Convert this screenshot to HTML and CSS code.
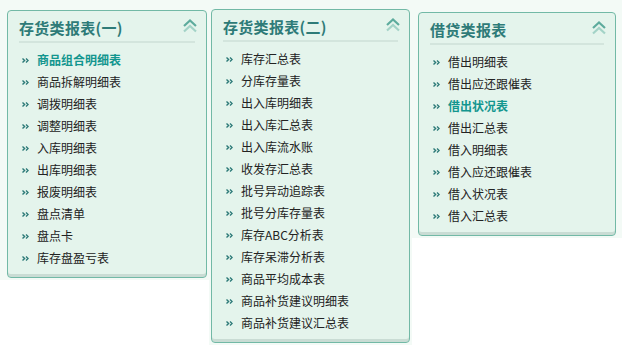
FILE: index.html
```html
<!DOCTYPE html>
<html lang="zh-CN">
<head>
<meta charset="UTF-8" />
<title>报表</title>
<link rel="stylesheet" href="styles.css">
</head>
<body>

<div class="board">

  <!-- 存货类报表(一) -->
  <div class="col col-1">
    <div class="panel">
      <div class="panel-head">
        <span class="title">存货类报表(一)</span>
        <svg class="fold" width="14" height="14" viewBox="0 0 14 14"><path d="M1 7 L7 1.5 L13 7" fill="none" stroke="#5dab9d" stroke-width="2.2"/><path d="M1 12.5 L7 7 L13 12.5" fill="none" stroke="#a3d3c7" stroke-width="2.2"/></svg>
      </div>
      <ul class="links">
        <li class="on">商品组合明细表</li>
        <li>商品拆解明细表</li>
        <li>调拨明细表</li>
        <li>调整明细表</li>
        <li>入库明细表</li>
        <li>出库明细表</li>
        <li>报废明细表</li>
        <li>盘点清单</li>
        <li>盘点卡</li>
        <li>库存盘盈亏表</li>
      </ul>
    </div>
  </div>

  <!-- 存货类报表(二) -->
  <div class="col col-2">
    <div class="panel">
      <div class="panel-head">
        <span class="title">存货类报表(二)</span>
        <svg class="fold" width="14" height="14" viewBox="0 0 14 14"><path d="M1 7 L7 1.5 L13 7" fill="none" stroke="#5dab9d" stroke-width="2.2"/><path d="M1 12.5 L7 7 L13 12.5" fill="none" stroke="#a3d3c7" stroke-width="2.2"/></svg>
      </div>
      <ul class="links">
        <li>库存汇总表</li>
        <li>分库存量表</li>
        <li>出入库明细表</li>
        <li>出入库汇总表</li>
        <li>出入库流水账</li>
        <li>收发存汇总表</li>
        <li>批号异动追踪表</li>
        <li>批号分库存量表</li>
        <li>库存ABC分析表</li>
        <li>库存呆滞分析表</li>
        <li>商品平均成本表</li>
        <li>商品补货建议明细表</li>
        <li>商品补货建议汇总表</li>
      </ul>
    </div>
  </div>

  <!-- 借贷类报表 -->
  <div class="col col-3">
    <div class="panel">
      <div class="panel-head">
        <span class="title">借贷类报表</span>
        <svg class="fold" width="14" height="14" viewBox="0 0 14 14"><path d="M1 7 L7 1.5 L13 7" fill="none" stroke="#5dab9d" stroke-width="2.2"/><path d="M1 12.5 L7 7 L13 12.5" fill="none" stroke="#a3d3c7" stroke-width="2.2"/></svg>
      </div>
      <ul class="links">
        <li>借出明细表</li>
        <li>借出应还跟催表</li>
        <li class="on">借出状况表</li>
        <li>借出汇总表</li>
        <li>借入明细表</li>
        <li>借入应还跟催表</li>
        <li>借入状况表</li>
        <li>借入汇总表</li>
      </ul>
    </div>
  </div>

</div>

</body>
</html>
```

FILE: styles.css
```css
body { margin: 0; background: #fff; font-family: "Noto Sans CJK SC", "Noto Sans", sans-serif; }

.board { display: flex; align-items: flex-start; }
.col { background: #f3faf6; }
.col-1 { padding: 10px 2px 2px 7px; }
.col-2 { padding: 9px 2px 2px 2px; }
.col-3 { padding: 12px 6px 2px 6px; }

/* painel */
.panel {
  box-sizing: border-box;
  background: #e4f4ec;
  border: 1px solid #72b9a6;
  border-radius: 4px;
  padding: 0 11px 8px;
  box-shadow: inset 0 -3px 0 #c9dcd4;
}
.col-1 .panel { width: 200px; }
.col-2 .panel { width: 199px; }
.col-3 .panel { width: 198px; }

.panel-head {
  display: flex; justify-content: space-between; align-items: center;
  height: 26px; padding-top: 4px;
  border-bottom: 2px solid #d3e5dd;
}
.title { font-size: 15px; font-weight: bold; color: #2e7b78; line-height: 26px; letter-spacing: 0.3px; }
.fold { margin-right: -2px; margin-top: -4px; }

/* lista */
.links { list-style: none; margin: 0; padding: 6px 0 0 3px; }
.links li {
  height: 22px; line-height: 22px; font-size: 12px; color: #222;
  padding-left: 15px; position: relative;
}
.links li::before {
  content: ""; position: absolute; left: 0; top: 9px; width: 7px; height: 5px;
  background: url("data:image/svg+xml;utf8,<svg xmlns='http://www.w3.org/2000/svg' width='7' height='5' viewBox='0 0 7 5'><path d='M0.5 0.5 L2.6 2.5 L0.5 4.5 M4 0.5 L6.1 2.5 L4 4.5' fill='none' stroke='%232d7a78' stroke-width='1.4'/></svg>") no-repeat;
}
.links li.on { color: #13968f; font-weight: bold; }
```
